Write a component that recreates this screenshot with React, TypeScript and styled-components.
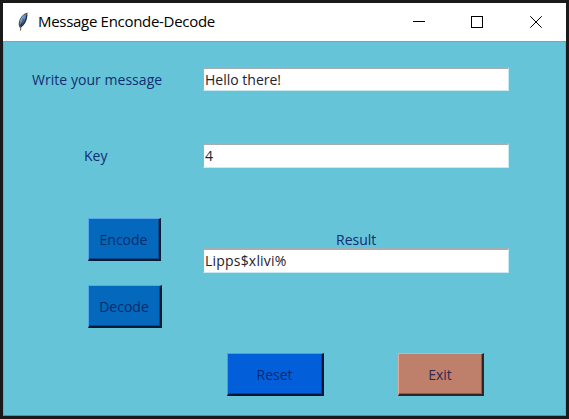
import React from "react";
import styled, { createGlobalStyle } from "styled-components";

const GlobalStyle = createGlobalStyle`
  * { box-sizing: border-box; }
  body { margin: 0; background: #1b1a1b; overflow: hidden; }
`;

const Window = styled.div`
  width: 569px;
  height: 419px;
  padding: 3px;
  background: #1b1a1b;
  font-family: "Open Sans", "Noto Sans", sans-serif;
  font-size: 14px;
  display: flex;
  flex-direction: column;
`;

const TitleBar = styled.header`
  height: 38px;
  flex: none;
  background: #fff;
  color: #000;
  display: flex;
  align-items: center;
  padding-left: 12px;
`;

const Title = styled.span`
  flex: 1;
  margin: -2px 0 0 7px;
  white-space: nowrap;
  font-size: 15px;
  line-height: 20px;
  letter-spacing: -0.3px;
`;

const Controls = styled.div`
  display: grid;
  grid-template-columns: 12px 12px 12px;
  column-gap: 47px;
  margin-right: 24px;
  svg { display: block; }
  svg:first-child { margin-left: 1px; }
`;

const Body = styled.main`
  flex: 1;
  min-height: 0;
  background: #66c4d9;
  border: 1px solid #5fb2c5;
  border-bottom-color: #4d95a5;
  color: #122d70;
`;

const Form = styled.div`
  display: grid;
  grid-template-columns: 199px 306px;
  height: 311px;
  padding-top: 25px;
`;

const Column = styled.div`
  display: flex;
  flex-direction: column;
  align-items: flex-start;
`;

const Label = styled.label<{ $x: number; $top?: number; $spacing?: number }>`
  height: 24px;
  line-height: 24px;
  white-space: nowrap;
  margin-left: ${(p) => p.$x}px;
  margin-top: ${(p) => p.$top ?? 0}px;
  letter-spacing: ${(p) => p.$spacing ?? 0}px;
`;

const Entry = styled.div<{ $top?: number; $h?: number; $spacing?: number }>`
  width: 306px;
  height: ${(p) => p.$h ?? 25}px;
  margin-top: ${(p) => p.$top ?? 0}px;
  padding-left: 1px;
  background: #fff;
  border: 1px solid #c9e9f0;
  border-top: 2px solid #a4afb3;
  border-left-color: #a4afb3;
  color: #24222c;
  line-height: 21px;
  white-space: nowrap;
  letter-spacing: ${(p) => p.$spacing ?? 0}px;
`;

const tones = {
  blue: { face: "#0468bd", light: "#5aa5ee", shade: "#044a8d", edge: "#071c34", text: "#092b6b" },
  royal: { face: "#035fd9", light: "#4f98f5", shade: "#0445a0", edge: "#06152f", text: "#082b75" },
  clay: { face: "#be806a", light: "#eaa996", shade: "#8c5b4b", edge: "#2d2528", text: "#302850" },
};

const Button = styled.button<{
  $tone: keyof typeof tones;
  $w: number;
  $x?: number;
  $top?: number;
}>`
  flex: none;
  width: ${(p) => p.$w}px;
  height: 43px;
  margin: ${(p) => p.$top ?? 0}px 0 0 ${(p) => p.$x ?? 0}px;
  padding: 0 1px 0 0;
  font: inherit;
  color: ${(p) => tones[p.$tone].text};
  background: ${(p) => tones[p.$tone].face};
  border: solid;
  border-width: 1px 2px 2px 1px;
  border-color: ${(p) => `${tones[p.$tone].light} ${tones[p.$tone].edge} ${tones[p.$tone].edge} ${tones[p.$tone].light}`};
  box-shadow: inset -1px -1px ${(p) => tones[p.$tone].shade};
`;

const Footer = styled.footer`
  display: flex;
  gap: 74px;
  padding-left: 223px;
`;

const Feather = () => (
  <svg width="16" height="22" viewBox="0 0 16 22">
    <path d="M12.6 1.5C9 2.2 5.3 6 4.1 10.3c-.7 2.6-.5 5 .8 6.5 2.8-.8 5.2-3.8 6.2-7 1-3.1 1.4-6.5 1.5-8.3Z" fill="#4b4f57" />
    <path d="M11.4 2.8C8.2 4.7 5.4 8.6 4.9 13.6l2-1.2C9.6 9.9 11 6.2 11.4 2.8Z" fill="#5790d4" />
    <path d="M11.9 4.2c-.3 4.8-2.3 8.7-5.8 11.2" fill="none" stroke="#17253b" strokeWidth="1" />
    <path d="M8.8 8.2C6.8 11.5 5.8 14.2 5.5 19.5" fill="none" stroke="#302b28" strokeWidth=".8" />
    <path d="M9.1 4.3c-2 2-3.2 4.3-3.6 6.4" fill="none" stroke="#a8c6e8" strokeWidth=".8" />
  </svg>
);

export default function App() {
  return (
    <>
      <GlobalStyle />
      <Window>
        <TitleBar>
          <Feather />
          <Title>Message Enconde-Decode</Title>
          <Controls>
            <svg width="12" height="12"><path d="M0 5.5h12" stroke="#000" /></svg>
            <svg width="12" height="12"><rect x=".5" y=".5" width="11" height="11" fill="none" stroke="#000" /></svg>
            <svg width="12" height="12"><path d="M.3.3l11.4 11.4M11.7.3L.3 11.7" stroke="#000" /></svg>
          </Controls>
        </TitleBar>
        <Body>
          <Form>
            <Column>
              <Label $x={28} $top={1} $spacing={0.04}>Write your message</Label>
              <Label $x={80} $top={52}>Key</Label>
              <Button $tone="blue" $w={73} $x={84} $top={50}>Encode</Button>
              <Button $tone="blue" $w={74} $x={84} $top={24}>Decode</Button>
            </Column>
            <Column>
              <Entry $h={24}>Hello there!</Entry>
              <Entry $top={52}>4</Entry>
              <Label $x={133} $top={60}>Result</Label>
              <Entry $top={-4} $spacing={0.2}>Lipps$xlivi%</Entry>
            </Column>
          </Form>
          <Footer>
            <Button $tone="royal" $w={97}>Reset</Button>
            <Button $tone="clay" $w={86}>Exit</Button>
          </Footer>
        </Body>
      </Window>
    </>
  );
}
